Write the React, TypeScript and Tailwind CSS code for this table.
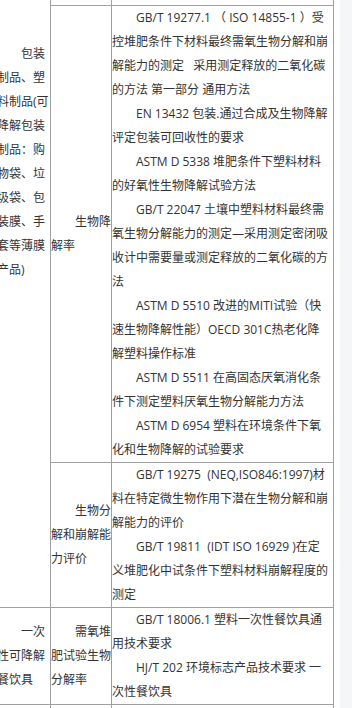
import { ReactElement, ReactNode } from "react";

const Lines = (props: { lines: string[] }): ReactElement => (
  <p className="indent-6">
    {props.lines.map((line, i) => (
      <span key={i}>
        {line}
        {i < props.lines.length - 1 && <br />}
      </span>
    ))}
  </p>
);

const Cell = (props: {
  children?: ReactNode;
  className?: string;
  rowSpan?: number;
}): ReactElement => (
  <td
    rowSpan={props.rowSpan}
    className={`p-0 border-r border-b border-[#a0a0a0] ${props.className ?? "align-middle"}`}
  >
    {props.children}
  </td>
);

const App = (): ReactElement => {
  return (
    <div
      className="flex h-[708px] overflow-hidden bg-white text-[12px] leading-[24px] text-[#333]"
      style={{ fontFamily: '"Open Sans", "Noto Sans CJK SC", sans-serif' }}
    >
      <div className="w-[340px] shrink-0 overflow-hidden">
        <table className="-ml-[3px] border-separate border-spacing-0">
          <tbody>
            <tr>
              <Cell rowSpan={3} className="align-top">
                <div className="w-[53px] pt-[42px] indent-6">
                  包装制品、塑料制品(可降解包装制品：购物袋、垃圾袋、包装膜、手套等薄膜产品)
                </div>
              </Cell>
              <Cell>
                <div className="h-[5px] w-[60px]" />
              </Cell>
              <Cell>
                <div className="h-[5px] w-[221px]" />
              </Cell>
            </tr>
            <tr>
              <Cell>
                <div className="w-[60px] indent-6">生物降解率</div>
              </Cell>
              <Cell>
                <div className="w-[221px]">
                  <Lines
                    lines={[
                      "GB/T 19277.1 （ ISO 14855-1 ）受",
                      "控堆肥条件下材料最终需氧生物分解和崩",
                      "解能力的测定\u00a0\u00a0 采用测定释放的二氧化碳",
                      "的方法 第一部分 通用方法",
                    ]}
                  />
                  <Lines
                    lines={[
                      "EN 13432 包装.通过合成及生物降解",
                      "评定包装可回收性的要求",
                    ]}
                  />
                  <Lines
                    lines={[
                      "ASTM D 5338 堆肥条件下塑料材料",
                      "的好氧性生物降解试验方法",
                    ]}
                  />
                  <Lines
                    lines={[
                      "GB/T 22047 土壤中塑料材料最终需",
                      "氧生物分解能力的测定—采用测定密闭吸",
                      "收计中需要量或测定释放的二氧化碳的方",
                      "法",
                    ]}
                  />
                  <Lines
                    lines={[
                      "ASTM D 5510 改进的MITI试验（快",
                      "速生物降解性能）OECD 301C热老化降",
                      "解塑料操作标准",
                    ]}
                  />
                  <Lines
                    lines={[
                      "ASTM D 5511 在高固态厌氧消化条",
                      "件下测定塑料厌氧生物分解能力方法",
                    ]}
                  />
                  <Lines
                    lines={[
                      "ASTM D 6954 塑料在环境条件下氧",
                      "化和生物降解的试验要求",
                    ]}
                  />
                </div>
              </Cell>
            </tr>
            <tr>
              <Cell>
                <div className="w-[60px] indent-6">生物分解和崩解能力评价</div>
              </Cell>
              <Cell>
                <div className="w-[221px]">
                  <Lines
                    lines={[
                      "GB/T 19275\u00a0 (NEQ,ISO846:1997)材",
                      "料在特定微生物作用下潜在生物分解和崩",
                      "解能力的评价",
                    ]}
                  />
                  <Lines
                    lines={[
                      "GB/T 19811\u00a0 (IDT ISO 16929 )在定",
                      "义堆肥化中试条件下塑料材料崩解程度的",
                      "测定",
                    ]}
                  />
                </div>
              </Cell>
            </tr>
            <tr>
              <Cell>
                <div className="w-[53px] indent-6">一次性可降解餐饮具</div>
              </Cell>
              <Cell>
                <div className="w-[60px] indent-6">需氧堆肥试验生物分解率</div>
              </Cell>
              <Cell>
                <div className="w-[221px]">
                  <Lines
                    lines={["GB/T 18006.1 塑料一次性餐饮具通", "用技术要求"]}
                  />
                  <Lines
                    lines={["HJ/T 202 环境标志产品技术要求 一", "次性餐饮具"]}
                  />
                </div>
              </Cell>
            </tr>
            <tr>
              <Cell>
                <div className="h-[48px] w-[53px]" />
              </Cell>
              <Cell>
                <div className="h-[48px] w-[60px]" />
              </Cell>
              <Cell>
                <div className="h-[48px] w-[221px]" />
              </Cell>
            </tr>
          </tbody>
        </table>
      </div>
      <div className="flex-1 bg-[#f5f6f8]" />
    </div>
  );
};

export default App;
